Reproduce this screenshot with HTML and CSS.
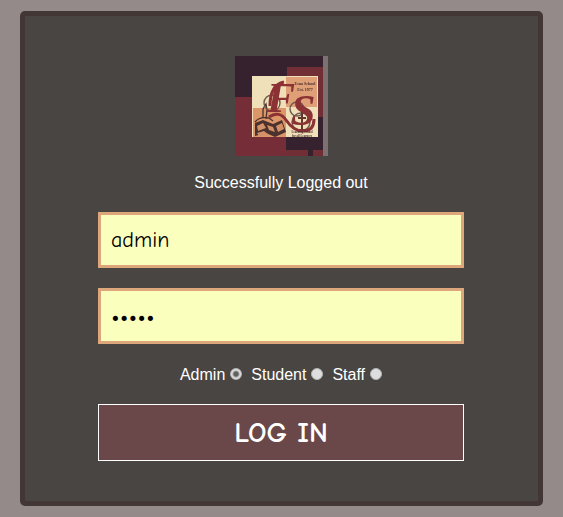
FILE: index.html
```
<!DOCTYPE html>
<html lang="en">
	<head>
		<meta http-equiv="content-type" content="text/html; charset=utf-8" />
		<title>Log In</title>
		<link rel="stylesheet" href="styles.css">
	</head>

	<body>
		<form id="login" class="login" onsubmit="return false">
			<svg class="logo" viewBox="0 0 93 100" role="img" aria-label="School logo">
				<defs>
					<filter id="soft" x="0" y="0" width="1" height="1"><feGaussianBlur stdDeviation="0.5"/></filter>
				</defs>
				<rect width="93" height="100" fill="#35242e"/>
				<g filter="url(#soft)">
					<rect width="93" height="100" fill="#35242e"/>
					<rect x="52" y="11" width="36" height="50" fill="#712e36"/>
					<rect y="41" width="51" height="59" fill="#742d38"/>
					<rect x="51" y="94" width="37" height="6" fill="#712e36"/>
					<rect x="73" y="94" width="5" height="6" fill="#35242e"/>
					<!-- centre panel -->
					<rect x="17" y="20" width="66" height="61" fill="#f0e0ba"/>
					<rect x="51" y="21" width="31" height="30" fill="#dfa078"/>
					<rect x="18" y="52" width="33" height="29" fill="#dc9668"/>
					<!-- open book -->
					<path d="M20 67l8-3 10 4 9-4 4 12-11 5-9-4-11 3z" fill="#4b302d"/>
					<path d="M22 70l6-3 3 5-8 3zM32 69l6 2 2 5-6-2zM41 70l6-3 2 6-6 3zM22 77l7-2 5 4-10 1z" fill="#d29167"/>
					<path d="M20 66c3-4 9-5 14-4l4 3M28 62v-9l3-5 1 6-1 9" fill="none" stroke="#4b302d" stroke-width="1.3"/>
					<!-- flourishes -->
					<circle cx="37" cy="47" r="8" fill="none" stroke="#6e5a4e" stroke-width="1.4"/>
					<circle cx="62" cy="53" r="7" fill="none" stroke="#6e5a4e" stroke-width="1.4"/>
					<circle cx="66" cy="66" r="9" fill="none" stroke="#6e5a4e" stroke-width="1.4"/>
					<path d="M67 56v18M63 62h8M64 74h7" stroke="#63382c" stroke-width="2"/>
					<text class="initial" x="32" y="56" font-size="42">F</text>
					<text class="initial" x="56" y="69" font-size="44">S</text>
					<path d="M34 61c7-5 13-3 17 3s9 11 17 11c7 0 11-4 11-12" fill="none" stroke="#8c3035" stroke-width="3"/>
					<path d="M35 50c0-13 4-22 14-24" fill="none" stroke="#8c3035" stroke-width="3"/>
					<text class="caption" x="70" y="29" font-size="4">Esna School</text>
					<text class="caption" x="70" y="35" font-size="4">Est. 1977</text>
					<text class="caption" x="67" y="77" font-size="3">Learning School</text>
					<text class="caption" x="67" y="81" font-size="3">for all Learners</text>
					<rect x="88" width="5" height="100" fill="#7d7071"/>
				</g>
			</svg>
			<p class="message">Successfully Logged out</p>
			<input class="field" type="text" name="username" value="admin" aria-label="Username">
			<input class="field" type="password" name="password" value="admin" aria-label="Password">
			<div class="roles">
				<label>Admin <input type="radio" name="role" value="admin" checked></label>
				<label>Student <input type="radio" name="role" value="student"></label>
				<label>Staff <input type="radio" name="role" value="staff"></label>
			</div>
			<button class="submit" type="submit">LOG IN</button>
		</form>
	</body>
</html>
```
FILE: styles.css
```
* {
	box-sizing: border-box;
}
body {
	margin: 0;
	padding: 11px 20px;
	background: #948a89;
	color: #ffffff;
	font: 16px/20px "Liberation Sans", Arial, sans-serif;
}
.login {
	display: flex;
	flex-direction: column;
	align-items: center;
	padding: 40px 74px 40px 73px;
	background: #494542;
	border: 5px solid #433736;
	border-radius: 5px;
}
.logo {
	display: block;
	width: 93px;
	height: 100px;
}
.initial {
	font-family: "Liberation Serif", serif;
	font-style: italic;
	font-weight: bold;
	fill: #8c3035;
}
.caption {
	font-family: "Liberation Serif", serif;
	font-weight: bold;
	text-anchor: middle;
	fill: #4b302d;
}
.message {
	margin: 17px 0 19px;
}
.field {
	width: 100%;
	height: 56px;
	margin-bottom: 20px;
	padding: 0 10px;
	background: #faffbd;
	border: 3px solid #dda77b;
	color: #000000;
	font: 22px "Comic Sans MS", "Comic Neue", Lato, sans-serif;
}
.field[type="password"] {
	font-size: 28px;
}
.roles {
	display: flex;
	gap: 9px;
	margin-bottom: 19px;
	padding-top: 1px;
}
.roles label {
	display: flex;
	align-items: center;
	gap: 5px;
}
.roles input {
	appearance: none;
	width: 12px;
	height: 12px;
	margin: 0 0 3px;
	border: 1px solid #b5b5b5;
	border-radius: 50%;
	background: #dedede;
}
.roles input:checked {
	background: radial-gradient(circle, #606060 0 2px, #dedede 4px);
}
.submit {
	width: 100%;
	height: 57px;
	padding: 0;
	background: #6a484a;
	border: 1px solid #ffffff;
	color: #ffffff;
	font: bold 29px "Comic Sans MS", "Comic Neue", Lato, sans-serif;
	cursor: pointer;
}
```
